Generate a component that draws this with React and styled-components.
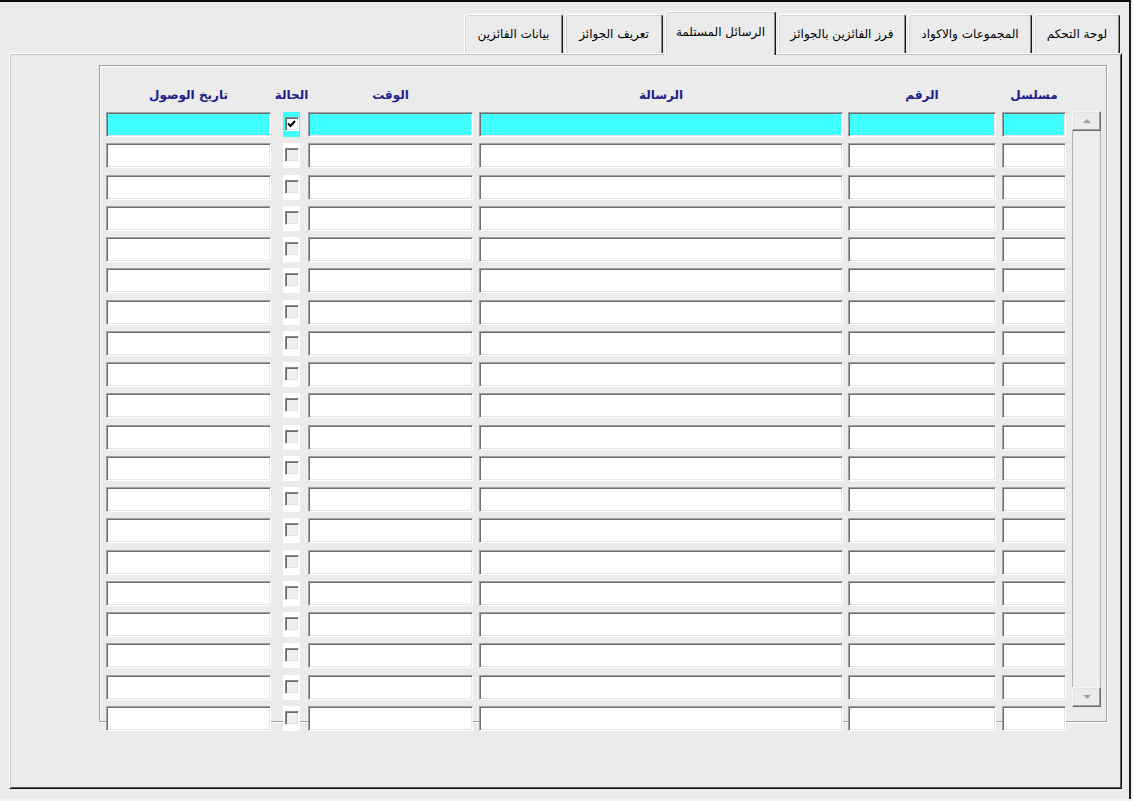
import React from 'react'
import styled, { createGlobalStyle } from 'styled-components'

const GlobalStyle = createGlobalStyle`
  html, body { margin: 0; padding: 0; background: #f3f3f3; }
  body { font-family: 'DejaVu Sans', 'Noto Sans', sans-serif; }
`

const columns = [
  { label: 'مسلسل', w: 64, gap: 6 },
  { label: 'الرقم', w: 148, gap: 5 },
  { label: 'الرسالة', w: 364, gap: 6 },
  { label: 'الوقت', w: 165, gap: 8 },
  { label: 'الحالة', w: 17, gap: 12, check: true },
  { label: 'تاريخ الوصول', w: 165, gap: 0 },
]

const tabs = [
  { label: 'لوحة التحكم', w: 86 },
  { label: 'المجموعات والاكواد', w: 124 },
  { label: 'فرز الفائزين بالجوائز', w: 128 },
  { label: 'الرسائل المستلمة', w: 111, active: true },
  { label: 'تعريف الجوائز', w: 98 },
  { label: 'بيانات الفائزين', w: 99 },
]

const Window = styled.div`
  width: 1131px;
  height: 799px;
  box-sizing: border-box;
  border-top: 2px solid #0a0a0a;
  border-right: 2px solid #1c1c1c;
  background: #ebebeb;
  padding-left: 9px;
  display: flex;
  flex-direction: column;
`

const TabStrip = styled.div`
  width: 1113px;
  height: 42px;
  flex: none;
  margin-top: 9px;
  box-sizing: border-box;
  padding-right: 2px;
  display: flex;
  align-items: flex-end;
  gap: 2px;
`

const Tab = styled.div`
  position: relative;
  z-index: ${p => (p.$active ? 2 : 0)};
  width: ${p => p.$w}px;
  height: ${p => (p.$active ? 44 : 39)}px;
  margin-bottom: ${p => (p.$active ? -2 : 0)}px;
  box-sizing: border-box;
  background: #ebebeb;
  border-top: 1px solid #ffffff;
  border-left: 1px solid #ffffff;
  border-right: 1px solid #1a1a1a;
  border-radius: 3px 3px 0 0;
  box-shadow: inset 1px 1px 0 #d6d6d6, inset -1px 0 0 #8a8a8a;
  display: flex;
  align-items: center;
  justify-content: center;
  padding-bottom: ${p => (p.$active ? 4 : 0)}px;
  font-size: 12px;
  color: #000;
  white-space: nowrap;
`

const Panel = styled.div`
  width: 1113px;
  height: 736px;
  flex: none;
  box-sizing: border-box;
  border: 1px solid;
  border-color: #ffffff #0f0f0f #0f0f0f #ffffff;
  box-shadow: inset 1px 1px 0 #c4c4c4, inset -1px -1px 0 #5a5a5a;
  background: #ebebeb;
  padding: 11px 0 0 89px;
`

const GroupBox = styled.div`
  width: 1008px;
  height: 657px;
  box-sizing: border-box;
  border: 1px solid #a0a0a0;
  box-shadow: inset 1px 1px 0 #ffffff, 1px 1px 0 #ffffff;
  padding: 18px 5px 0 6px;
  display: flex;
  align-items: flex-start;
  gap: 6px;
`

const Table = styled.div`
  width: 960px;
  flex: none;
  display: flex;
  flex-direction: column;
`

const HeaderRow = styled.div`
  display: flex;
  flex: none;
  height: 22px;
  margin-bottom: 6px;
`

const HeaderLabel = styled.div`
  width: ${p => p.$w}px;
  flex: none;
  margin-inline-end: ${p => p.$gap}px;
  display: flex;
  justify-content: center;
  align-items: center;
  white-space: nowrap;
  font-size: 12px;
  font-weight: bold;
  color: #20208a;
`

const Rows = styled.div`
  display: flex;
  flex: none;
  flex-direction: column;
  gap: 6.25px;
`

const Row = styled.div`
  display: flex;
  flex: none;
  height: 25px;
`

const TextCell = styled.div`
  width: ${p => p.$w}px;
  flex: none;
  height: 25px;
  margin-inline-end: ${p => p.$gap}px;
  box-sizing: border-box;
  background: ${p => (p.$selected ? '#40ffff' : '#ffffff')};
  border: 1px solid;
  border-color: #a0a0a0 #ffffff #ffffff #a0a0a0;
  box-shadow: inset 1px 1px 0 #6e6e6e, inset -1px -1px 0 #e6e6e6;
`

const CheckCell = styled.div`
  width: ${p => p.$w}px;
  flex: none;
  height: 25px;
  margin-inline-end: ${p => p.$gap}px;
  background: ${p => (p.$selected ? '#40ffff' : '#ffffff')};
  display: flex;
  justify-content: center;
  align-items: flex-start;
  padding-top: 5px;
  box-sizing: border-box;
`

const CheckBox = styled.div`
  width: 14px;
  height: 14px;
  box-sizing: border-box;
  border: 1px solid;
  border-color: #8a8a8a #ffffff #ffffff #8a8a8a;
  box-shadow: inset 1px 1px 0 #6a6a6a, inset -1px -1px 0 #e3e3e3;
  background: ${p => (p.$checked ? '#ffffff' : '#efefef')};
  display: flex;
  align-items: center;
  justify-content: center;
`

const ScrollBar = styled.div`
  width: 29px;
  height: 596px;
  margin-top: 27px;
  flex: none;
  display: flex;
  flex-direction: column;
`

const ScrollButton = styled.div`
  height: 20px;
  flex: none;
  box-sizing: border-box;
  background: #ebebeb;
  border: 1px solid;
  border-color: #f6f6f6 #6a6a6a #6a6a6a #f6f6f6;
  box-shadow: inset -1px -1px 0 #a0a0a0, inset 1px 1px 0 #e3e3e3;
  display: flex;
  align-items: center;
  justify-content: center;
`

const Arrow = styled.div`
  width: 0;
  height: 0;
  border-left: 4px solid transparent;
  border-right: 4px solid transparent;
  ${p => (p.$down ? 'border-top' : 'border-bottom')}: 4px solid #a0a0a0;
`

const Track = styled.div`
  flex: 1;
  box-sizing: border-box;
  border-left: 1px solid #b4b4b4;
  border-right: 1px solid #b4b4b4;
  background: #ededed;
`

function CheckMark() {
  return (
    <svg width="9" height="8" viewBox="0 0 9 8">
      <path d="M1 3.5 L3.5 6 L8 1" fill="none" stroke="#000" strokeWidth="2" />
    </svg>
  )
}

export default function App() {
  const rows = Array.from({ length: 20 }, (_, i) => i)

  return (
    <>
      <GlobalStyle />
      <Window>
        <TabStrip dir="rtl">
          {tabs.map(t => (
            <Tab key={t.label} $w={t.w} $active={t.active}>{t.label}</Tab>
          ))}
        </TabStrip>

        <Panel>
          <GroupBox dir="rtl">
            <ScrollBar>
              <ScrollButton><Arrow /></ScrollButton>
              <Track />
              <ScrollButton><Arrow $down /></ScrollButton>
            </ScrollBar>

            <Table>
              <HeaderRow>
                {columns.map(c => (
                  <HeaderLabel key={c.label} $w={c.w} $gap={c.gap}>{c.label}</HeaderLabel>
                ))}
              </HeaderRow>
              <Rows>
                {rows.map(r => (
                  <Row key={r}>
                    {columns.map(c =>
                      c.check ? (
                        <CheckCell key={c.label} $w={c.w} $gap={c.gap} $selected={r === 0}>
                          <CheckBox $checked={r === 0}>{r === 0 && <CheckMark />}</CheckBox>
                        </CheckCell>
                      ) : (
                        <TextCell key={c.label} $w={c.w} $gap={c.gap} $selected={r === 0} />
                      )
                    )}
                  </Row>
                ))}
              </Rows>
            </Table>
          </GroupBox>
        </Panel>
      </Window>
    </>
  )
}
